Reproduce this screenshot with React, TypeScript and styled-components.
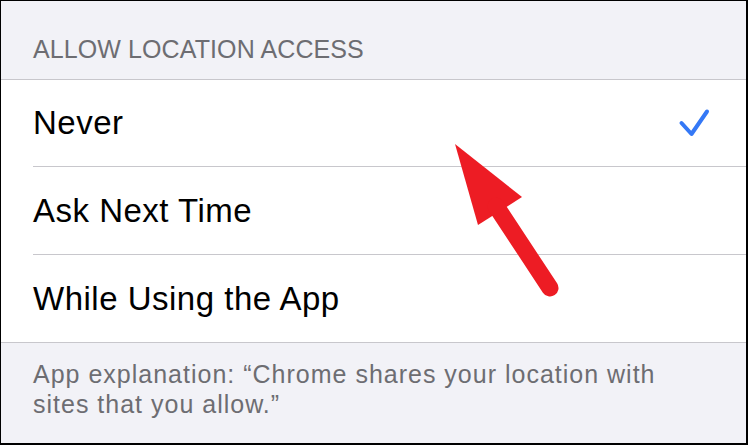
import * as React from "react";
import styled, { createGlobalStyle } from "styled-components";

const GlobalStyle = createGlobalStyle`
  html, body {
    margin: 0;
    padding: 0;
    background: #ffffff;
  }
  body {
    font-family: "Liberation Sans", Arial, sans-serif;
    -webkit-font-smoothing: antialiased;
  }
`;

const Frame = styled.div`
  position: relative;
  width: 748px;
  height: 445px;
  box-sizing: border-box;
  border-style: solid;
  border-color: #000;
  border-width: 1px 2px 2px 1px;
  background: #f2f2f7;
  overflow: hidden;
  display: flex;
  flex-direction: column;
`;

const SectionHeader = styled.div`
  height: 79px;
  box-sizing: border-box;
  padding: 33px 0 0 32px;
  font-size: 25px;
  line-height: 30px;
  color: #6d6d72;
  letter-spacing: 0.1px;
  border-bottom: 1px solid #c8c7cc;
`;

const List = styled.ul`
  list-style: none;
  margin: 0;
  padding: 0;
  background: #ffffff;
  border-bottom: 1px solid #c8c7cc;
`;

const Row = styled.li`
  display: flex;
  align-items: center;
  justify-content: space-between;
  height: 87px;
  padding: 0 36px 0 32px;

  &:first-child {
    height: 86px;
  }
`;

const Separator = styled.li`
  height: 1px;
  margin-left: 32px;
  background: #c8c7cc;
`;

const Label = styled.span`
  font-size: 33px;
  line-height: 40px;
  color: #000;
  letter-spacing: 0.5px;
`;

const Footer = styled.div`
  flex: 1;
  padding: 16px 60px 0 32px;
  font-size: 25px;
  line-height: 30px;
  color: #6d6d72;
  letter-spacing: 1px;
`;

const Pointer = styled.svg`
  position: absolute;
  left: 0;
  top: 0;
  pointer-events: none;
`;

const Check = () => (
  <svg width="32" height="30" viewBox="0 0 32 30" aria-hidden="true">
    <path
      d="M3.5 15 L13.5 26 L29 3.5"
      fill="none"
      stroke="#3478f6"
      strokeWidth="4"
      strokeLinecap="round"
      strokeLinejoin="round"
    />
  </svg>
);

const options = ["Never", "Ask Next Time", "While Using the App"];

export default function App() {
  const selected = "Never";

  return (
    <>
      <GlobalStyle />
      <Frame>
        <SectionHeader>ALLOW LOCATION ACCESS</SectionHeader>
        <List>
          {options.map((option, i) => (
            <React.Fragment key={option}>
              {i > 0 && <Separator />}
              <Row>
                <Label>{option}</Label>
                {option === selected && <Check />}
              </Row>
            </React.Fragment>
          ))}
        </List>
        <Footer>
          App explanation: “Chrome shares your location with sites that you allow.”
        </Footer>
        <Pointer width="748" height="445" viewBox="0 0 748 445" aria-hidden="true">
          <polygon points="454,143 521,196 477,224" fill="#ed1c24" />
          <line
            x1="495"
            y1="205"
            x2="549"
            y2="287"
            stroke="#ed1c24"
            strokeWidth="17"
            strokeLinecap="round"
          />
        </Pointer>
      </Frame>
    </>
  );
}
